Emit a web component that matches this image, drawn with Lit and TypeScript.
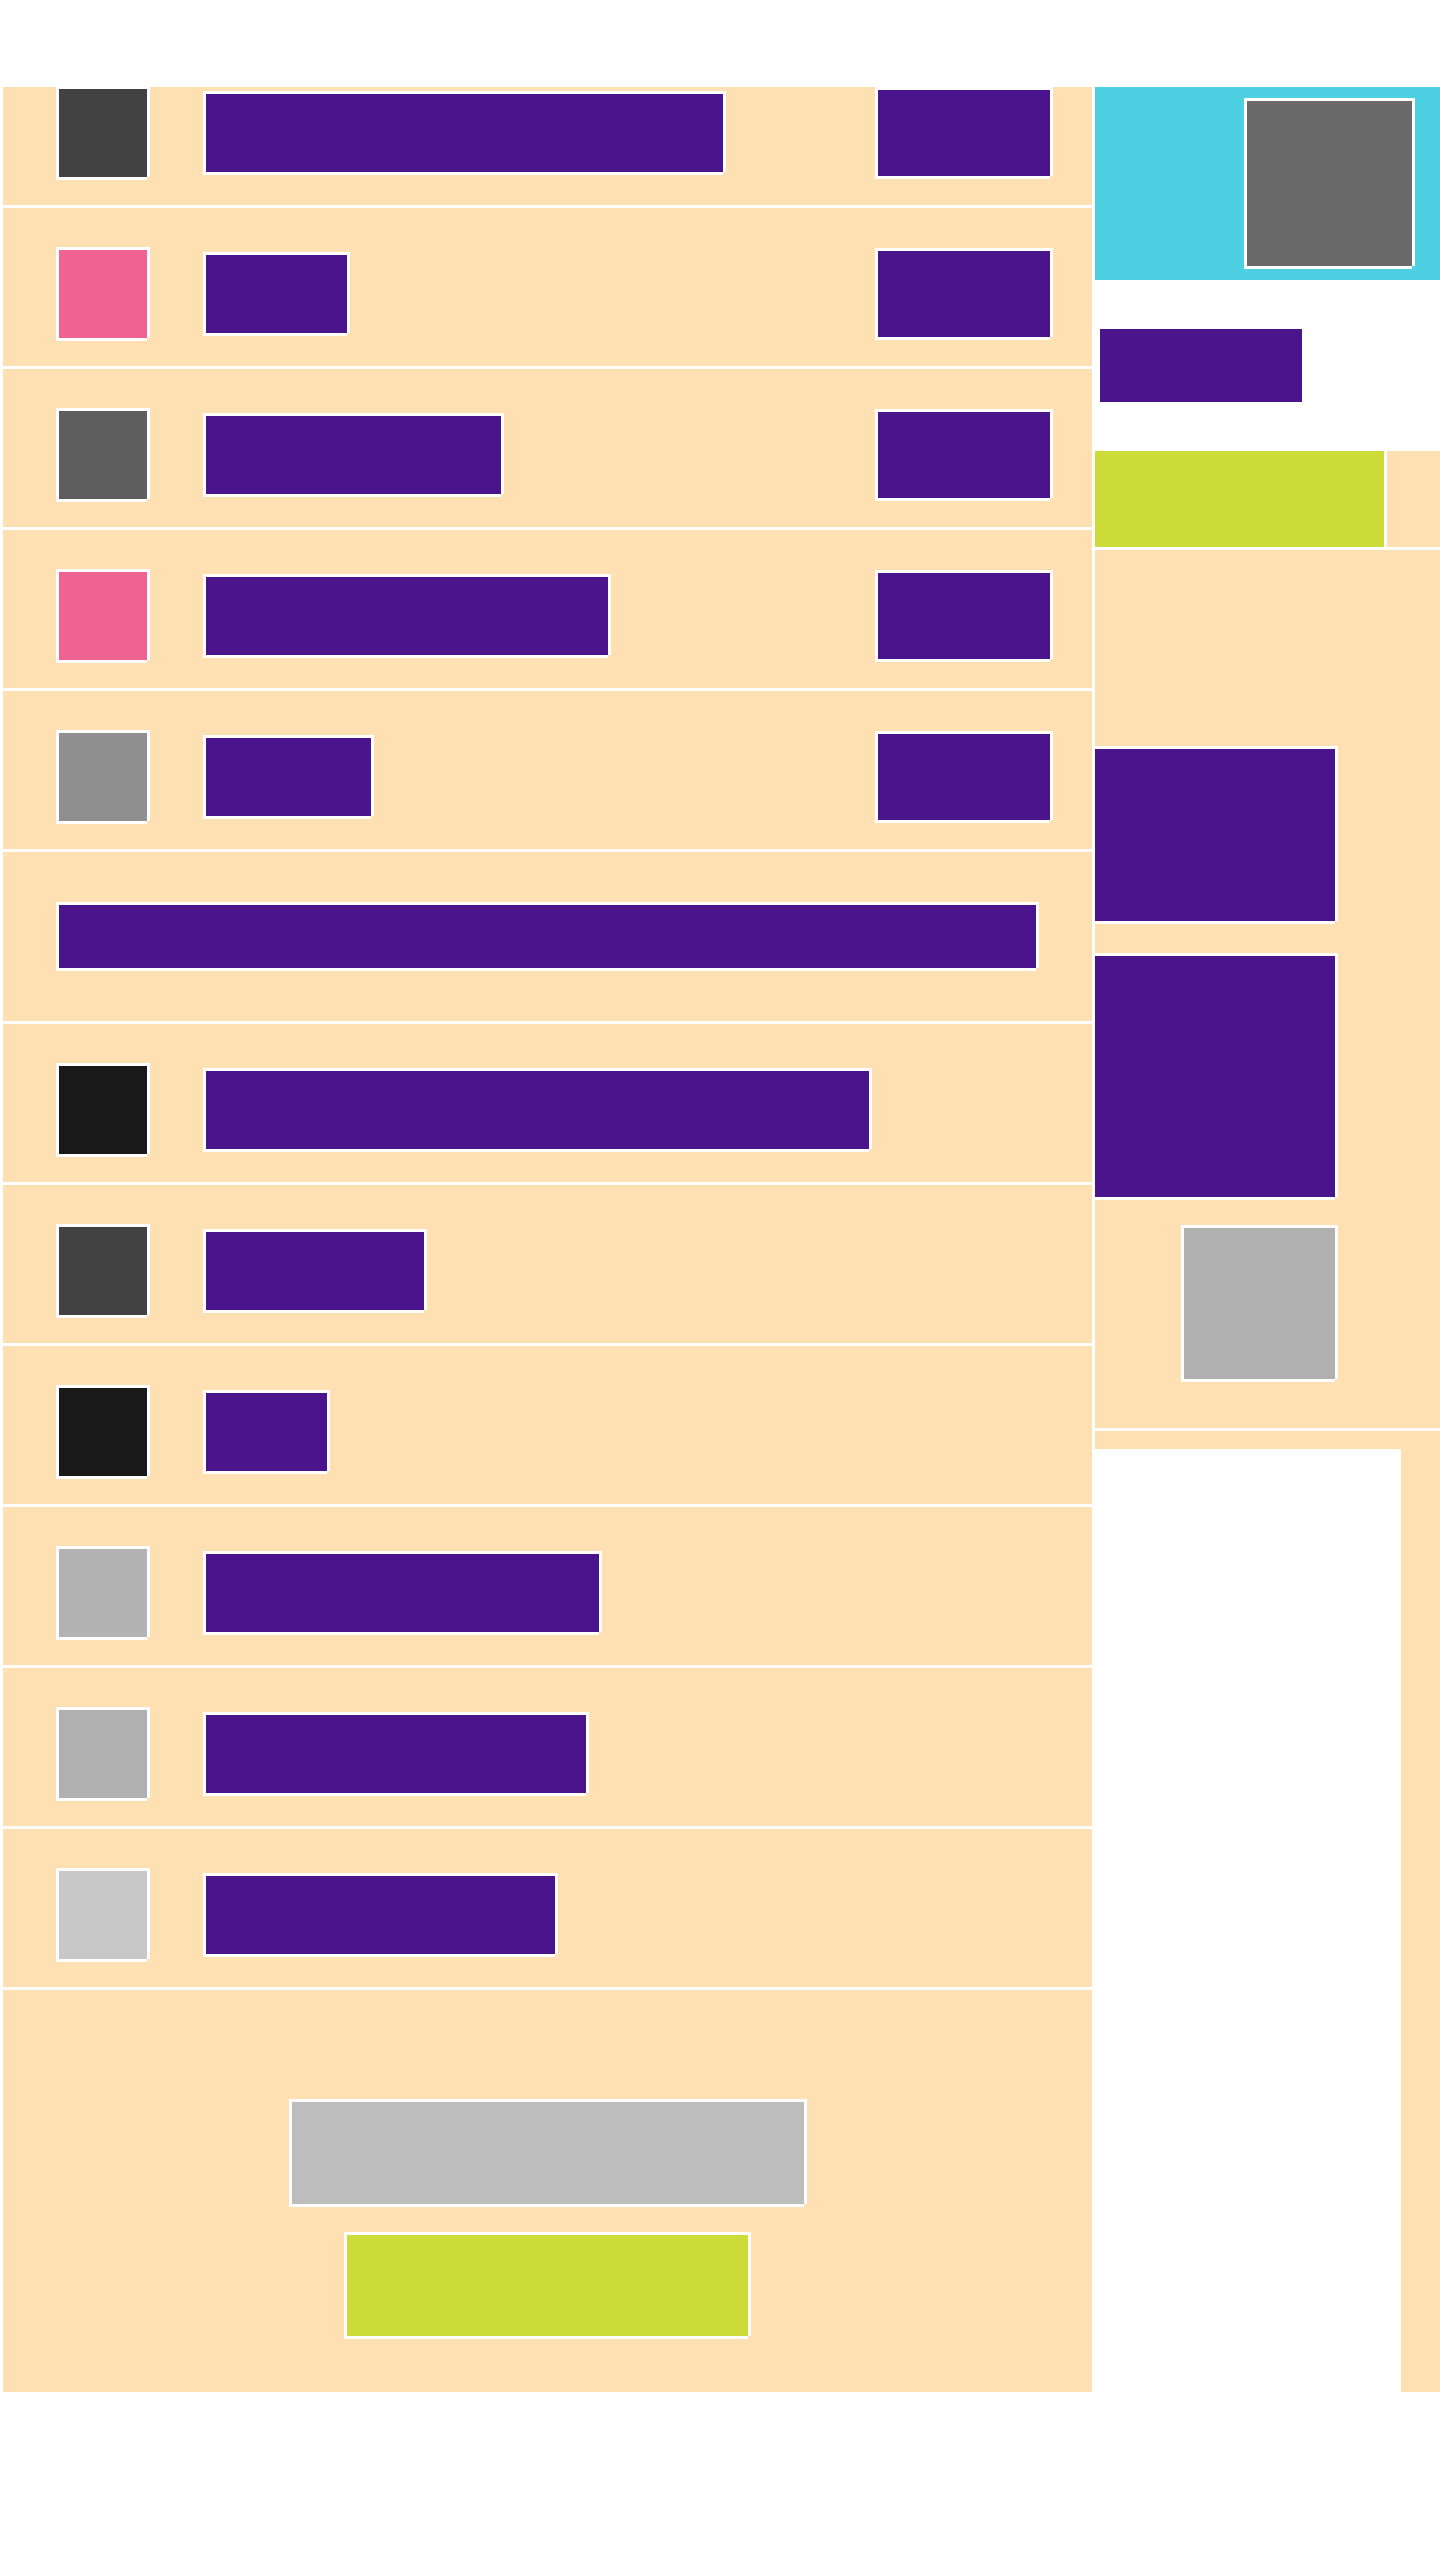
import { LitElement, html, css, nothing } from "lit";
import { customElement } from "lit/decorators.js";
import { styleMap } from "lit/directives/style-map.js";

interface Entry {
  tone: string;
  width: number;
  action?: boolean;
}

const RECENT: Entry[] = [
  { tone: "#424242", width: 517, action: true },
  { tone: "#f06292", width: 141, action: true },
  { tone: "#5e5e5e", width: 295, action: true },
  { tone: "#f06292", width: 402, action: true },
  { tone: "#8f8f8f", width: 165, action: true },
];

const OTHERS: Entry[] = [
  { tone: "#191919", width: 663 },
  { tone: "#424242", width: 218 },
  { tone: "#191919", width: 121 },
  { tone: "#b3b3b3", width: 393 },
  { tone: "#b0b0b0", width: 380 },
  { tone: "#c8c8c8", width: 349 },
];

@customElement("app-root")
export class AppRoot extends LitElement {
  static styles = css`
    :host {
      --peach: #ffe0b2;
      --purple: #4a148c;
      --lime: #cddc39;
      --cyan: #4dd0e1;
      display: block;
      background: #fff;
      font-family: "Liberation Sans", sans-serif;
    }
    .page {
      display: grid;
      grid-template-columns: minmax(0, 1fr) 345px;
      column-gap: 3px;
      padding: 87px 0 168px 3px;
    }
    .main,
    .side {
      display: flex;
      flex-direction: column;
      gap: 3px;
    }
    .list {
      display: flex;
      flex-direction: column;
      gap: 3px;
      margin: 0;
      padding: 0;
      list-style: none;
    }
    /* White outline, open at the bottom right corner. */
    .box {
      flex: none;
      border: 0;
      padding: 0;
      box-shadow: -3px -3px #fff, 3px -3px #fff, -3px 3px #fff, 3px 0 #fff,
        0 3px #fff;
    }
    .row {
      display: flex;
      align-items: center;
      padding: 42px 42px 28px 56px;
      background: var(--peach);
    }
    .list.top .row:first-child {
      padding-top: 2px;
    }
    .avatar {
      width: 88px;
      height: 88px;
      margin-right: 59px;
    }
    .name {
      flex: 0 1 auto;
      height: 78px;
      background: var(--purple);
    }
    .action {
      width: 172px;
      height: 86px;
      margin-left: auto;
      background: var(--purple);
    }
    .section {
      padding: 53px 56px;
      background: var(--peach);
    }
    .heading {
      height: 63px;
      margin: 0;
      background: var(--purple);
    }
    .footer {
      display: flex;
      flex-direction: column;
      align-items: center;
      gap: 31px;
      padding: 112px 56px 56px;
      background: var(--peach);
    }
    .more {
      width: 512px;
      height: 102px;
      background: #bdbdbd;
    }
    .confirm {
      width: 401px;
      height: 101px;
      background: var(--lime);
    }
    .banner {
      display: flex;
      justify-content: flex-end;
      padding: 14px 28px;
      background: var(--cyan);
    }
    .portrait {
      width: 165px;
      height: 165px;
      background: #6a6a6a;
    }
    .title {
      padding: 49px 5px 46px;
    }
    .title-bar {
      width: 202px;
      height: 73px;
      margin: 0;
      background: var(--purple);
    }
    .head {
      display: flex;
      flex-direction: column;
    }
    .tabs {
      display: grid;
      grid-template-columns: 289px minmax(0, 1fr);
      gap: 3px;
      height: 96px;
    }
    .tab {
      border: 0;
      padding: 0;
      background: var(--peach);
    }
    .tab.current {
      background: var(--lime);
    }
    .panel {
      display: flex;
      flex-direction: column;
      align-items: flex-end;
      padding: 199px 105px 49px 0;
      background: var(--peach);
    }
    .card {
      width: 240px;
      height: 172px;
      margin-bottom: 35px;
      background: var(--purple);
    }
    .card.tall {
      height: 241px;
      margin-bottom: 31px;
    }
    .thumb {
      width: 151px;
      height: 151px;
      background: #b0b0b0;
    }
    .rest {
      display: flex;
      flex: 1;
      padding: 18px 39px 0 0;
      background: var(--peach);
    }
    .blank {
      flex: 1;
      background: #fff;
    }
  `;

  private row(entry: Entry) {
    return html`<li class="row">
      <div class="box avatar" style=${styleMap({ background: entry.tone })}></div>
      <div class="box name" style=${styleMap({ width: `${entry.width}px` })}></div>
      ${entry.action
        ? html`<button class="box action" type="button" aria-label="Action"></button>`
        : nothing}
    </li>`;
  }

  render() {
    return html`<div class="page">
      <main class="main">
        <ul class="list top">
          ${RECENT.map((entry) => this.row(entry))}
        </ul>
        <div class="section"><div class="box heading"></div></div>
        <ul class="list">
          ${OTHERS.map((entry) => this.row(entry))}
        </ul>
        <div class="footer">
          <button class="box more" type="button" aria-label="More"></button>
          <button class="box confirm" type="button" aria-label="Confirm"></button>
        </div>
      </main>
      <aside class="side">
        <div class="head">
          <div class="banner"><div class="box portrait"></div></div>
          <div class="title"><div class="title-bar"></div></div>
        </div>
        <div class="tabs">
          <button class="tab current" type="button" aria-label="First tab"></button>
          <button class="tab" type="button" aria-label="Second tab"></button>
        </div>
        <div class="panel">
          <div class="box card"></div>
          <div class="box card tall"></div>
          <div class="box thumb"></div>
        </div>
        <div class="rest"><div class="blank"></div></div>
      </aside>
    </div>`;
  }
}
